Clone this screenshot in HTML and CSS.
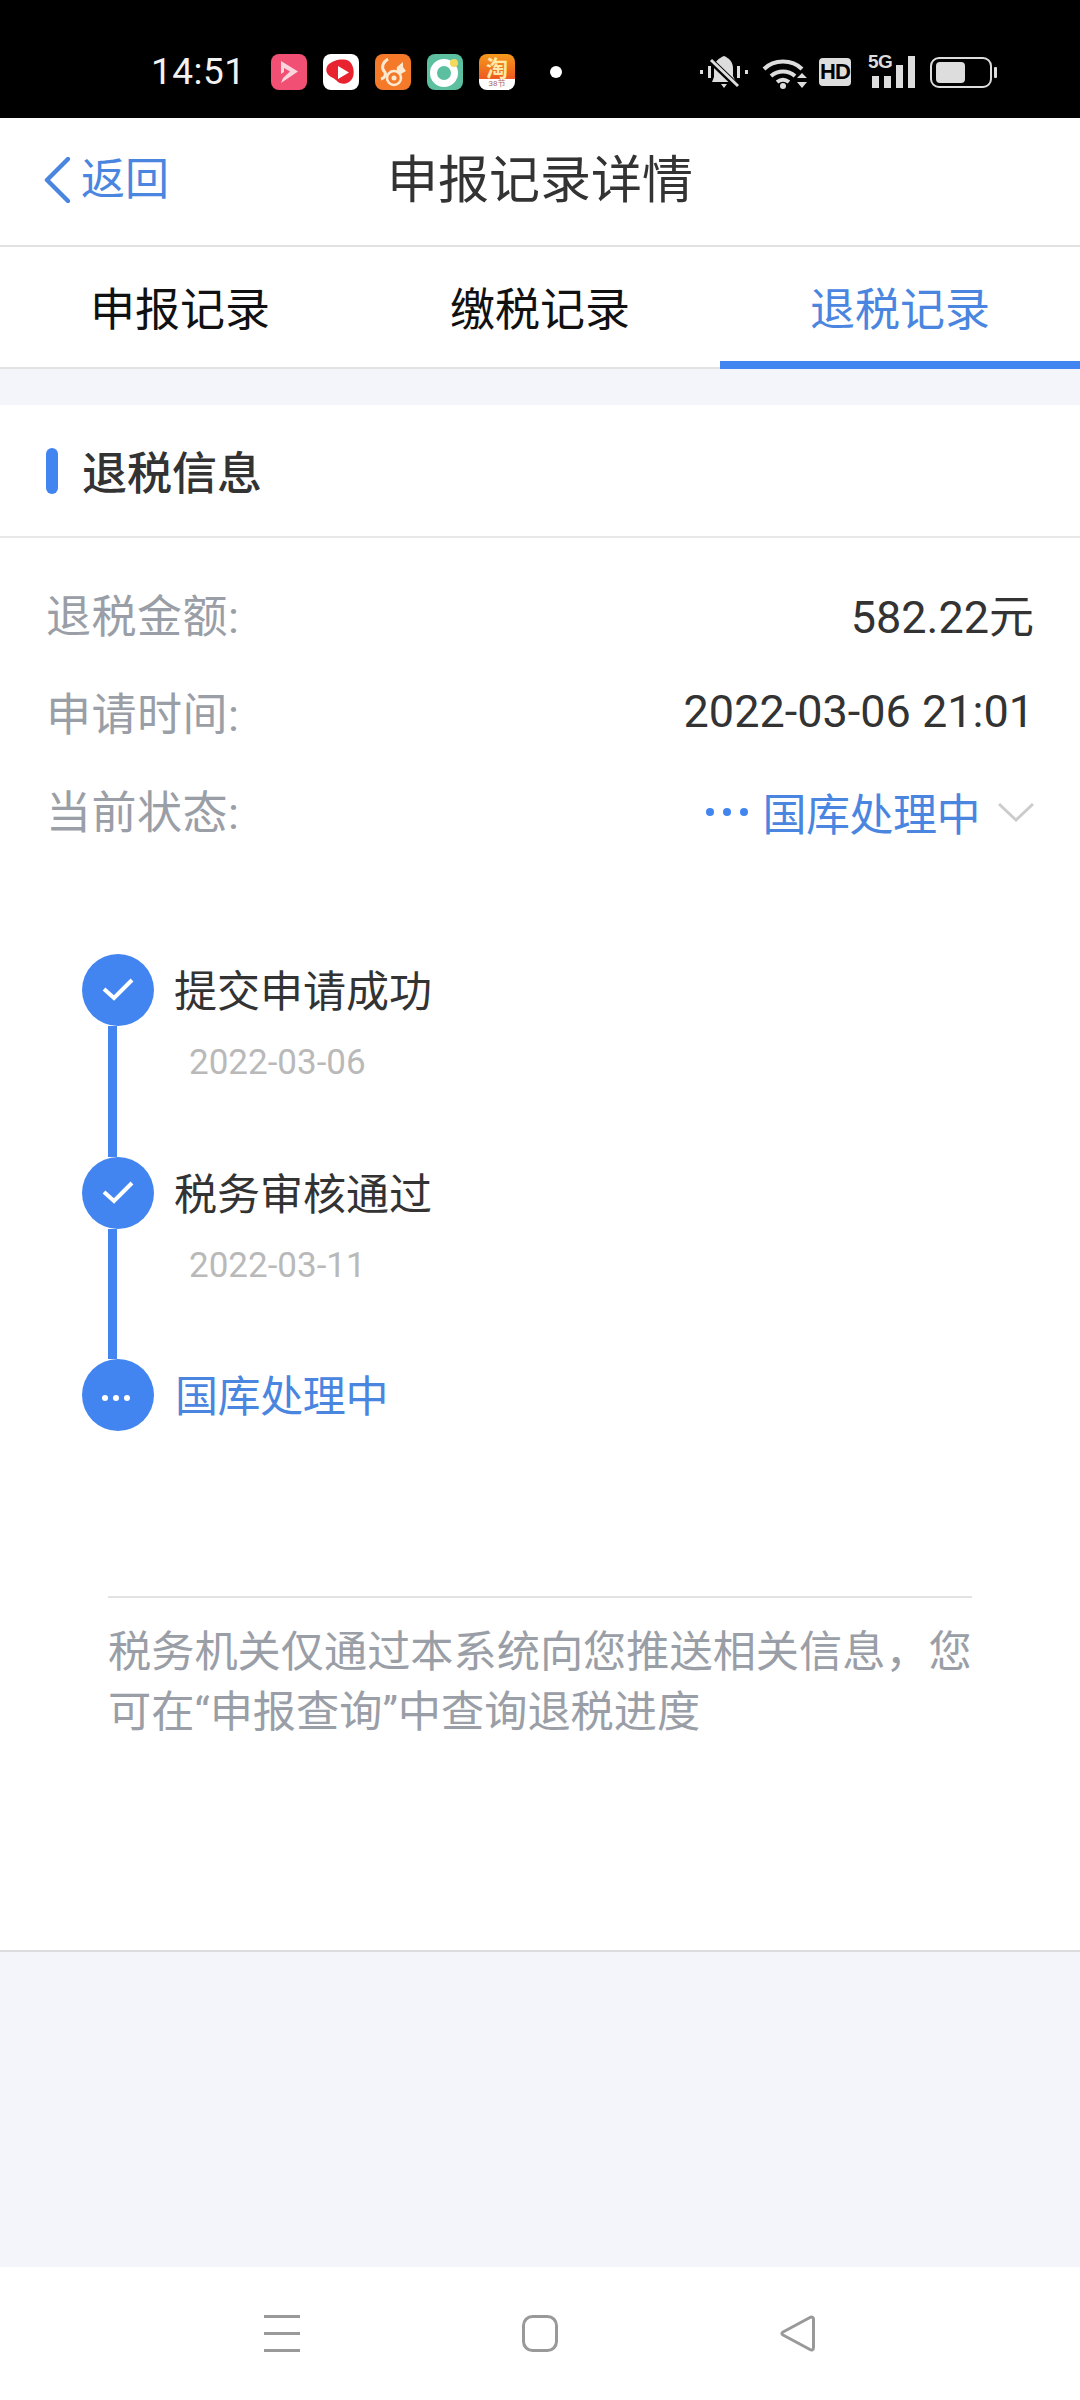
FILE: index.html
```html
<!DOCTYPE html>
<html lang="zh-CN">
<head>
<meta charset="utf-8">
<title>申报记录详情</title>
<link rel="stylesheet" href="styles.css">
</head>
<body>
<div class="page">
  <div class="statusbar">
    <span class="clock">14:51</span>
    <div class="apps">
      <svg class="app" viewBox="0 0 36 36"><rect width="36" height="36" rx="8" fill="#f24f74"/><path d="M10 7l17 10.500L10 29l2-5 7-6.500-6-3.500v4l-3 2z" fill="#fbd5de"/></svg>
      <svg class="app" viewBox="0 0 36 36"><rect width="36" height="36" rx="8" fill="#fff"/><path d="M5 11c5-5 15-7 21-4 5 4 6 13 3 18-3 5-10 6-14 3-2-2-4-4-7-5-5-3-6-8-3-12z" fill="#e8222f"/><path d="M15 12l11 6.500-11 6.500z" fill="#fff"/></svg>
      <svg class="app" viewBox="0 0 36 36"><rect width="36" height="36" rx="8" fill="#f47a2a"/><path d="M13 5c-5 3-7 8-4 12 3 3 1 7-3 8" fill="none" stroke="#fde9cf" stroke-width="3"/><path d="M22 13l6-5v5l3 4-5 3c-3-1-5-3-4-7z" fill="#fde9cf"/><circle cx="19" cy="24" r="7" fill="none" stroke="#fde9cf" stroke-width="2.500"/><circle cx="19" cy="24" r="2.500" fill="#fde9cf"/></svg>
      <svg class="app" viewBox="0 0 36 36"><rect width="36" height="36" rx="8" fill="#5cbf9f"/><circle cx="17" cy="19" r="10.500" fill="none" stroke="#fff" stroke-width="7"/><circle cx="27" cy="9" r="4" fill="#f6d85c"/></svg>
      <div class="taobao"><span class="tao-main">淘</span><span class="tao-sub">38节</span></div>
    </div>
    <span class="notif-dot"></span>
    <div class="sys">
      <svg class="i-bell" viewBox="0 0 48 34"><path d="M0 15h3v4H0zM8 11h3v12H8zM45 15h3v4h-3zM37 11h3v12h-3z" fill="#ddd"/><path d="M24 1c5 2 9 6 9 12v8l3 6H12l2-5V13c0-6 5-10 10-12zM21 29h6l-3 4z" fill="#ddd"/><path d="M10 5l28 27" stroke="#000" stroke-width="6"/><path d="M11 5l27 26" stroke="#ddd" stroke-width="3"/></svg>
      <svg class="i-wifi" viewBox="0 0 45 33"><path d="M2 13C12 3 30 3 40 13M9 20c7-6 17-6 24 0M15 26c4-3 8-3 12 0" fill="none" stroke="#ddd" stroke-width="4"/><circle cx="21" cy="30" r="3" fill="#ddd"/><path d="M35 22l5-5 5 5zM35 26h10l-5 6z" fill="#ddd"/></svg>
      <span class="i-hd">HD</span>
      <div class="i-sig">
        <span class="fiveg">5G</span>
        <svg class="bars" viewBox="0 0 47 32"><path d="M4 20h7v12H4zM16 20h7v12h-7zM28 9h7v23h-7zM40 0h7v32h-7z" fill="#ddd"/></svg>
      </div>
      <svg class="i-batt" viewBox="0 0 67 31"><rect x="1" y="1" width="60" height="29" rx="8" fill="none" stroke="#ddd" stroke-width="2"/><rect x="6" y="5" width="29" height="21" rx="4" fill="#ddd"/><rect x="64" y="10" width="3" height="11" rx="1" fill="#ddd"/></svg>
    </div>
  </div>

  <header class="navbar">
    <div class="back">
      <svg class="back-ico" viewBox="0 0 26 46"><path d="M24 2L3 23l21 21" fill="none" stroke="#4a86e0" stroke-width="4.500" stroke-linecap="round" stroke-linejoin="round"/></svg>
      <span>返回</span>
    </div>
    <h1 class="title">申报记录详情</h1>
  </header>

  <nav class="tabs">
    <div class="tab">申报记录</div>
    <div class="tab">缴税记录</div>
    <div class="tab tab-on">退税记录</div>
  </nav>

  <main class="card">
    <div class="sec-head"><span class="sec-mark"></span><h2 class="sec-title">退税信息</h2></div>
    <div class="rows">
      <div class="row"><span class="label">退税金额:</span><span class="value">582.22元</span></div>
      <div class="row"><span class="label">申请时间:</span><span class="value">2022-03-06 21:01</span></div>
      <div class="row"><span class="label">当前状态:</span>
        <span class="value value-blue">
          <span class="dots"><i></i><i></i><i></i></span>
          <span class="state">国库处理中</span>
          <svg class="chev" viewBox="0 0 36 20"><path d="M1 2l17 16L35 2" fill="none" stroke="#ccc" stroke-width="3"/></svg>
        </span>
      </div>
    </div>

    <ol class="timeline">
      <li class="step">
        <div class="rail"><span class="node"><svg class="tick" viewBox="0 0 32 24"><path d="M2 12l10 9L30 3" fill="none" stroke="#fff" stroke-width="4"/></svg></span><span class="line"></span></div>
        <div class="step-text"><div class="step-name">提交申请成功</div><div class="step-date">2022-03-06</div></div>
      </li>
      <li class="step">
        <div class="rail"><span class="node"><svg class="tick" viewBox="0 0 32 24"><path d="M2 12l10 9L30 3" fill="none" stroke="#fff" stroke-width="4"/></svg></span><span class="line"></span></div>
        <div class="step-text"><div class="step-name">税务审核通过</div><div class="step-date">2022-03-11</div></div>
      </li>
      <li class="step step-last">
        <div class="rail"><span class="node"><span class="node-dots"><i></i><i></i><i></i></span></span></div>
        <div class="step-text"><div class="step-name step-blue">国库处理中</div></div>
      </li>
    </ol>

    <p class="note">税务机关仅通过本系统向您推送相关信息，您可在“申报查询”中查询退税进度</p>
  </main>

  <div class="spacer"></div>

  <footer class="sysnav">
    <svg class="nav-ico" viewBox="0 0 36 37"><path d="M0 1.500h36M0 18.500h36M0 35.500h36" stroke="#999" stroke-width="3"/></svg>
    <svg class="nav-ico" viewBox="0 0 36 37"><rect x="1.500" y="1.500" width="33" height="34" rx="9" fill="none" stroke="#999" stroke-width="3"/></svg>
    <svg class="nav-ico" viewBox="0 0 36 37"><path d="M30 2.500L3 17c-1.500.8-1.500 2.200 0 3l27 14.500c2 1 3.500 0 3.500-2v-28c0-2-1.500-3-3.500-2z" fill="none" stroke="#999" stroke-width="3" stroke-linejoin="round"/></svg>
  </footer>
</div>
</body>
</html>
```
FILE: styles.css
```css
* { box-sizing: border-box; }
html, body { margin: 0; padding: 0; }
body {
  width: 1080px;
  height: 2400px;
  overflow: hidden;
  font-family: Roboto, "Noto Sans CJK SC", sans-serif;
  background: #f3f5fa;
  color: #333;
}
.page { display: flex; flex-direction: column; height: 2400px; }

/* status bar */
.statusbar {
  height: 118px;
  flex: none;
  background: #000;
  display: flex;
  align-items: center;
  padding: 26px 0 0 151px;
  color: #fff;
}
.clock { font-size: 37px; line-height: 44px; width: 120px; letter-spacing: .5px; color: #f2f2f2; }
.apps { display: flex; gap: 16px; align-items: center; }
.app { width: 36px; height: 36px; display: block; }
.taobao {
  width: 36px; height: 36px; border-radius: 8px;
  background: linear-gradient(#f59a1d 0, #ee5a1f 68%, #fff 70%);
  display: flex; flex-direction: column; align-items: center;
  overflow: hidden;
}
.tao-main { font: 700 22px/25px "Noto Sans CJK SC", sans-serif; color: #ffe9a8; }
.tao-sub { font: 400 8px/10px Roboto, "Noto Sans CJK SC", sans-serif; color: #a66; }
.notif-dot { width: 12px; height: 12px; border-radius: 50%; background: #fff; margin-left: 35px; }
.sys { display: flex; align-items: center; margin-left: 138px; }
.i-bell { width: 48px; height: 34px; display: block; }
.i-wifi { width: 45px; height: 33px; display: block; margin-left: 14px; }
.i-hd {
  width: 32px; height: 28px; margin-left: 12px; border-radius: 4px;
  background: #ddd; color: #000;
  font: 700 22px/28px "Liberation Sans", sans-serif; letter-spacing: -1px; text-align: center;
}
.i-sig { width: 47px; height: 32px; margin-left: 17px; position: relative; }
.bars { width: 47px; height: 32px; display: block; }
.fiveg { position: absolute; left: 0; top: -3px; font: 700 19px/18px "Liberation Sans", sans-serif; color: #ddd; letter-spacing: -.5px; }
.i-batt { width: 67px; height: 31px; display: block; margin-left: 15px; }

/* nav bar */
.navbar {
  height: 129px; flex: none; background: #fff;
  border-bottom: 2px solid #e2e2e2;
  display: flex; align-items: center; justify-content: center;
  position: relative;
  padding-bottom: 2px;
}
.back { position: absolute; left: 44px; top: 39px; display: flex; align-items: center; gap: 11px; color: #4a86e0; font-size: 44px; line-height: 46px; }
.back-ico { width: 26px; height: 46px; display: block; }
.title { margin: 0; font-size: 51px; line-height: 60px; font-weight: 400; color: #333; }

/* tabs */
.tabs {
  height: 122px; flex: none; background: #fff;
  border-bottom: 2px solid #e2e2e2;
  display: flex;
}
.tab { flex: 1; text-align: center; font-size: 45px; line-height: 112px; padding-top: 8px; color: #111; }
.tab-on { color: #4a86e0; border-bottom: 8px solid #4285f0; height: 122px; }

/* card */
.card { margin-top: 36px; background: #fff; border-bottom: 2px solid #dcdcdf; height: 1547px; flex: none; }
.sec-head { height: 133px; display: flex; align-items: center; padding-left: 46px; border-bottom: 2px solid #e8e8e8; }
.sec-mark { width: 12px; height: 46px; border-radius: 6px; background: #4285f0; }
.sec-title { margin: 8px 0 0 24px; font-size: 45px; line-height: 50px; font-weight: 500; color: #333; }
.rows { padding: 26px 46px 0; }
.row { height: 98px; display: flex; justify-content: space-between; align-items: center; }
.label { font-size: 45px; color: #9a9ea6; letter-spacing: .5px; }
.value { font-size: 45px; color: #333; }
.value-blue { display: flex; align-items: center; color: #4a86e0; padding-top: 5px; font-size: 44px; }
.dots { display: flex; gap: 9px; margin-right: 15px; }
.dots i { width: 8px; height: 8px; border-radius: 50%; background: #4285f0; display: block; }
.state { letter-spacing: -.5px; }
.chev { width: 36px; height: 20px; margin-left: 18px; display: block; }

/* timeline */
.timeline { list-style: none; margin: 96px 0 0; padding: 0 0 0 82px; }
.step { display: flex; height: 202.5px; }
.step-last { height: 72px; }
.rail { width: 72px; display: flex; flex-direction: column; flex: none; }
.node { width: 72px; height: 72px; flex: none; border-radius: 50%; background: #4285f0; display: flex; align-items: center; justify-content: center; }
.tick { width: 32px; height: 24px; display: block; margin-top: -2px; }
.line { width: 9px; flex: 1; margin-left: 26px; background: #4285f0; }
.node-dots { display: flex; gap: 5px; margin-top: 5px; margin-left: -4px; }
.node-dots i { width: 6px; height: 6px; border-radius: 50%; background: #fff; display: block; }
.step-text { padding-left: 20px; }
.step-name { font-size: 43px; line-height: 72px; padding-top: 2px; color: #333; }
.step-date { font-size: 35px; line-height: 40px; color: #b9b9b9; padding: 15px 0 0 15px; }
.step-blue { color: #4a86e0; letter-spacing: -.4px; padding-left: 1px; }

/* note */
.note {
  margin: 165px 108px 0;
  border-top: 2px solid #e3e3e3;
  padding-top: 25px;
  font-size: 43.2px; line-height: 60px; color: #9a9ea6;
}

.spacer { flex: 1; background: #f3f5fa; }

/* system nav */
.sysnav { height: 133px; flex: none; background: #fff; display: flex; gap: 222px; padding: 48px 0 0 264px; align-items: flex-start; }
.nav-ico { width: 36px; height: 37px; display: block; }
```
